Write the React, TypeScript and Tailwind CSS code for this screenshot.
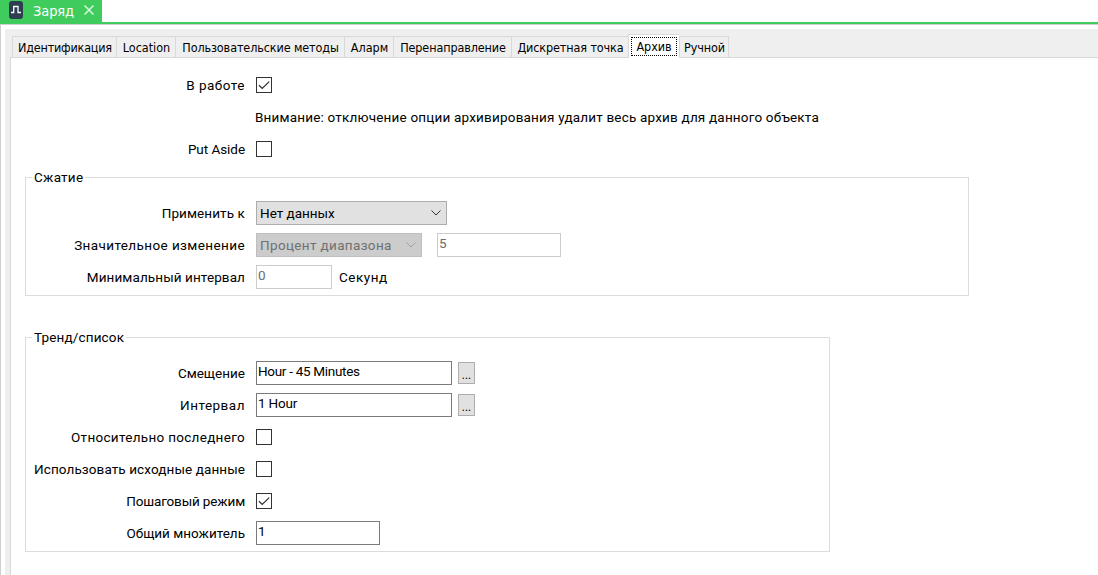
import type { ReactNode } from "react";

const tabs = [
  { label: "Идентификация", box: "w-[104px]", text: "tracking-[-0.22px]" },
  { label: "Location", box: "w-[59px]", text: "" },
  { label: "Пользовательские методы", box: "w-[169px]", text: "tracking-[-0.12px]" },
  { label: "Аларм", box: "w-[49px]", text: "" },
  { label: "Перенаправление", box: "w-[118px]", text: "tracking-[-0.12px]" },
  { label: "Дискретная точка", box: "w-[117px]", text: "tracking-[-0.12px]" },
  { label: "Архив", box: "w-[51px]", text: "tracking-[-0.1px]", active: true },
  { label: "Ручной", box: "w-[50px]", text: "tracking-[-0.1px]" },
];

function Row({ label, track = "", children }: { label: string; track?: string; children: ReactNode }) {
  return (
    <div className="flex h-8 items-center">
      <span className="w-[219px] shrink-0 text-right whitespace-nowrap">
        <span className={track}>{label}</span>
      </span>
      <div className="ml-[11px] flex items-center">{children}</div>
    </div>
  );
}

function Check({ checked = false }: { checked?: boolean }) {
  return (
    <span className="flex size-4 items-center justify-center border border-[#333] bg-white">
      {checked && (
        <svg width="14" height="14" viewBox="0 0 14 14" fill="none" stroke="#333" strokeWidth="1.3">
          <path d="M2 7.2 5.2 10.4 12.2 3.6" />
        </svg>
      )}
    </span>
  );
}

function Select({ value, box, track, disabled = false }: { value: string; box: string; track: string; disabled?: boolean }) {
  return (
    <div
      className={`flex h-6 items-center justify-between border pr-[5px] pl-[3px] ${box} ${
        disabled ? "border-[#bfbfbf] bg-[#ccc] text-[#707070]" : "border-[#adadad] bg-[#e1e1e1]"
      }`}
    >
      <span className={track}>{value}</span>
      <svg width="10" height="6" viewBox="0 0 10 6" fill="none" stroke={disabled ? "#a0a0a0" : "#333"}>
        <path d="M.5.5 5 5 9.5.5" />
      </svg>
    </div>
  );
}

function Field({ value, box, track = "", disabled = false }: { value: string; box: string; track?: string; disabled?: boolean }) {
  return (
    <div
      className={`h-6 border bg-white pl-px leading-[18px] ${box} ${
        disabled ? "border-[#ccc] text-[#6d6d6d]" : "border-[#7a7a7a]"
      }`}
    >
      <span className={track}>{value}</span>
    </div>
  );
}

function Group({ title, box, track, children }: { title: string; box: string; track: string; children: ReactNode }) {
  return (
    <section className={`relative ml-[14px] border border-[#dcdcdc] pt-[19px] pb-[2px] ${box}`}>
      <h2 className={`absolute -top-[9px] left-[6px] bg-white px-[2px] leading-4 ${track}`}>{title}</h2>
      {children}
    </section>
  );
}

function More() {
  return (
    <button className="ml-[6px] flex h-[22px] w-[17px] items-center justify-center border border-[#adadad] bg-[#e1e1e1] pt-[3px] text-[12px] leading-none">
      ...
    </button>
  );
}

export default function App() {
  return (
    <div className="flex h-[575px] w-[1098px] flex-col overflow-hidden bg-white font-['Roboto',sans-serif] text-[13.5px] leading-4 text-black">
      <header className="flex h-6 border-b-2 border-[#40cc5c]">
        <div className="flex h-[22px] w-[102px] items-center bg-[#40cc5c] pl-[9px] text-white">
          <svg width="14" height="18" viewBox="0 0 14 18" className="-mt-[2px]">
            <rect width="14" height="18" rx="3" fill="#2c3e50" />
            <path d="M2 11.5H4.7V5.5H9V11.5H12" fill="none" stroke="#fff" strokeWidth="1.3" />
          </svg>
          <span className="ml-[10px] w-[41px] font-['DejaVu_Sans_Condensed','DejaVu_Sans',sans-serif] text-[14.5px] leading-[20px] tracking-[-0.1px]">
            Заряд
          </span>
          <svg width="10" height="10" viewBox="0 0 10 10" className="-mt-[2px] ml-[10px]" stroke="#d8f6de" strokeWidth="1.5">
            <path d="M.5.5 9.5 9.5M9.5.5.5 9.5" />
          </svg>
        </div>
      </header>
      <div className="min-h-0 flex-1 border-t border-l border-[#cfcfcf] pt-1 pl-1">
        <div className="flex h-full flex-col bg-[#efefef] pl-[5px]">
          <nav className="z-10 flex h-7 items-end pl-[2px] font-['DejaVu_Sans_Condensed','DejaVu_Sans',sans-serif] text-[12.5px]">
            {tabs.map((t, i) => (
              <div
                key={t.label}
                className={`flex shrink-0 justify-center whitespace-nowrap border-t border-l border-[#d9d9d9] ${t.box} ${
                  t.active ? "-mb-px h-6 items-start bg-white pt-[2px]" : "h-[21px] items-center pt-px pl-px"
                } ${i === tabs.length - 1 ? "border-r" : ""}`}
              >
                {t.active ? (
                  <span className={`flex h-[19px] w-[46px] items-center justify-center border border-dotted border-black ${t.text}`}>
                    {t.label}
                  </span>
                ) : (
                  <span className={t.text}>{t.label}</span>
                )}
              </div>
            ))}
          </nav>
          <main className="flex-1 border-t border-l border-[#d9d9d9] bg-white pt-[11px]">
            <div className="ml-[15px]">
              <Row label="В работе" track="tracking-[0.5px]"><Check checked /></Row>
              <p className="ml-[229px] h-8 leading-8 tracking-[0.19px]">
                Внимание: отключение опции архивирования удалит весь архив для данного объекта
              </p>
              <Row label="Put Aside" track="tracking-[-0.05px]"><Check /></Row>
            </div>
            <Group title="Сжатие" box="mt-3 w-[944px]" track="tracking-[0.25px]">
              <Row label="Применить к" track="tracking-[0.1px]"><Select value="Нет данных" box="w-[191px]" track="" /></Row>
              <Row label="Значительное изменение" track="tracking-[0.4px]">
                <Select value="Процент диапазона" box="w-[166px]" track="tracking-[0.35px]" disabled />
                <div className="ml-[15px]"><Field value="5" box="w-[124px]" disabled /></div>
              </Row>
              <Row label="Минимальный интервал" track="tracking-[0.1px]">
                <Field value="0" box="w-[76px]" disabled />
                <span className="ml-[7px] tracking-[0.5px]">Секунд</span>
              </Row>
            </Group>
            <Group title="Тренд/список" box="mt-[41px] w-[805px]" track="tracking-[0.15px]">
              <Row label="Смещение"><Field value="Hour - 45 Minutes" box="w-[196px]" track="tracking-[-0.3px]" /><More /></Row>
              <Row label="Интервал" track="tracking-[0.5px]"><Field value="1 Hour" box="w-[196px]" track="tracking-[-0.2px]" /><More /></Row>
              <Row label="Относительно последнего" track="tracking-[0.3px]"><Check /></Row>
              <Row label="Использовать исходные данные" track="tracking-[0.1px]"><Check /></Row>
              <Row label="Пошаговый режим" track="tracking-[-0.15px]"><Check checked /></Row>
              <Row label="Общий множитель"><Field value="1" box="w-[124px]" /></Row>
            </Group>
          </main>
        </div>
      </div>
    </div>
  );
}
